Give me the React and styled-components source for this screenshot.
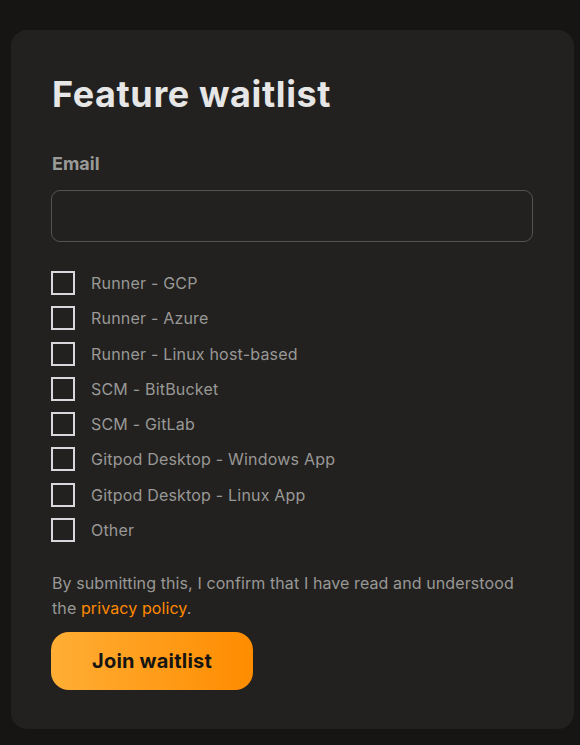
import React from 'react';
import styled, { createGlobalStyle } from 'styled-components';

const GlobalStyle = createGlobalStyle`
  html, body {
    margin: 0;
    padding: 0;
    background: #161513;
  }
  * { box-sizing: border-box; }
`;

const Page = styled.div`
  min-height: 745px;
  padding: 30px 6px 0 11px;
  font-family: Inter, "Noto Sans", sans-serif;
`;

const Card = styled.form`
  background: #22211f;
  border-radius: 16px;
  padding: 40px 41px 40px 40px;
  height: 699px;
`;

const Title = styled.h1`
  margin: 0 0 34px 1px;
  font-size: 36px;
  line-height: 48px;
  font-weight: 700;
  letter-spacing: 0.6px;
  color: #e6e6e6;
`;

const Label = styled.label`
  display: block;
  font-size: 18px;
  font-weight: 700;
  line-height: 24px;
  color: #9a9a98;
  margin: 0 0 14px 1px;
`;

const Input = styled.input`
  display: block;
  width: 100%;
  height: 52px;
  background: transparent;
  border: 1px solid #55534f;
  border-radius: 9px;
  outline: none;
  color: #e6e6e6;
  font: inherit;
  padding: 0 14px;
  margin-bottom: 29px;
`;

const Options = styled.div`
  display: flex;
  flex-direction: column;
  gap: 11.3px;
  margin-bottom: 29px;
`;

const Option = styled.label`
  display: flex;
  align-items: center;
  gap: 16px;
  font-size: 16px;
  letter-spacing: 0.2px;
  color: #999896;
  height: 24px;
`;

const Box = styled.input.attrs({ type: 'checkbox' })`
  appearance: none;
  margin: 0;
  width: 24px;
  height: 24px;
  border: 2px solid #d8d8dc;
  background: transparent;
  flex-shrink: 0;
`;

const Note = styled.p`
  margin: 0 0 11px 1px;
  font-size: 16px;
  line-height: 25px;
  letter-spacing: 0.1px;
  color: #999896;
`;

const Link = styled.a`
  color: #ff8a00;
  text-decoration: none;
`;

const Button = styled.button`
  width: 202px;
  height: 58px;
  border: none;
  border-radius: 18px;
  background: linear-gradient(90deg, #ffae35 0%, #ff8c00 100%);
  color: #161513;
  font-family: inherit;
  font-size: 20px;
  font-weight: 700;
  letter-spacing: 0.2px;
  cursor: pointer;
`;

const options = [
  'Runner - GCP',
  'Runner - Azure',
  'Runner - Linux host-based',
  'SCM - BitBucket',
  'SCM - GitLab',
  'Gitpod Desktop - Windows App',
  'Gitpod Desktop - Linux App',
  'Other',
];

export default function App() {
  return (
    <Page>
      <GlobalStyle />
      <Card onSubmit={(e) => e.preventDefault()}>
        <Title>Feature waitlist</Title>
        <Label htmlFor="email">Email</Label>
        <Input id="email" type="email" />
        <Options>
          {options.map((o) => (
            <Option key={o}>
              <Box />
              {o}
            </Option>
          ))}
        </Options>
        <Note>
          By submitting this, I confirm that I have read and understood the{' '}
          <Link href="#">privacy policy</Link>.
        </Note>
        <Button type="submit">Join waitlist</Button>
      </Card>
    </Page>
  );
}
